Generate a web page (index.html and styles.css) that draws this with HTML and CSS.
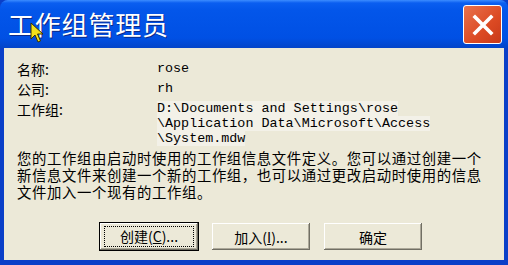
FILE: index.html
```html
<!DOCTYPE html>
<html lang="zh-CN">
<head>
    <meta charset="UTF-8">
    <title>工作组管理员</title>
    <link rel="stylesheet" href="styles.css">
</head>
<body>
    <div class="window">
        <div class="titlebar">
            <span class="title">工作组管理员</span>
            <div class="close">
                <svg width="22" height="22" viewBox="0 0 22 22">
                    <path d="M3 3 L19 19 M19 3 L3 19" stroke="#fff" stroke-width="3.6" stroke-linecap="square" fill="none"/>
                </svg>
            </div>
        </div>
        <div class="content">
            <div class="fields">
                <div class="label">名称:</div>
                <div class="value">rose</div>
                <div class="label">公司:</div>
                <div class="value">rh</div>
                <div class="label">工作组:</div>
                <div class="value path"><span>D:\Documents and Settings\rose<br>\Application Data\Microsoft\Access<br>\System.mdw</span></div>
            </div>
            <div class="desc">
                <div class="line">您的工作组由启动时使用的工作组信息文件定义。您可以通过创建一个</div>
                <div class="line">新信息文件来创建一个新的工作组，也可以通过更改启动时使用的信息</div>
                <div class="line">文件加入一个现有的工作组。</div>
            </div>
            <div class="buttons">
                <button class="btn default"><span class="focus">创建(<u>C</u>)...</span></button>
                <button class="btn">加入(<u>I</u>)...</button>
                <button class="btn">确定</button>
            </div>
        </div>
        <svg class="pointer" width="14" height="22" viewBox="0 0 14 22">
            <path d="M1 1 L1 17 L5 13 L8 20 L10.5 19 L7.5 12 L13 12 Z" fill="#f2e21a" stroke="#3a3300" stroke-width="1"/>
        </svg>
    </div>
</body>
</html>
```

FILE: styles.css
```css
body { margin: 0; background: #0a3fc8; }
.window { position: relative; width: 508px; height: 265px; background: #0a3fc8; display: flex; flex-direction: column; border-radius: 8px 8px 0 0; overflow: hidden; }
.titlebar { height: 48px; display: flex; align-items: center; justify-content: space-between; padding: 0 6px 0 8px; background: linear-gradient(#3c8cff 0px, #0a5ef0 3px, #0356ea 10px, #0050e4 38px, #0344c8 48px); }
.title { color: #fff; font-family: "Noto Sans CJK SC", "DejaVu Sans", sans-serif; font-size: 26px; line-height: 30px; text-shadow: 1px 1px 0 #0b2a8a; letter-spacing: 0.8px; }
.close { width: 37px; height: 37px; border: 1px solid #fff; border-radius: 3px; background: linear-gradient(135deg, #e8724e, #dc4a23 60%, #c8391a); display: flex; align-items: center; justify-content: center; margin-top: 1px; }
.content { flex: 1; margin: 0 4px 5px 4px; background: #ece9d8; padding: 11px 13px 0 13px; font-family: "Noto Sans CJK SC", "DejaVu Sans", sans-serif; font-size: 14px; color: #000; }
.fields { display: grid; grid-template-columns: 140px 1fr; align-items: start; }
.label { line-height: 20px; }
.value { font-family: "Liberation Mono", monospace; font-size: 13.4px; line-height: 20px; }
.path { line-height: 15px; padding-top: 2px; }
.path span { background: #f3f1e8; }
.desc { margin-top: 3px; display: flex; flex-direction: column; font-size: 14.4px; letter-spacing: 0.6px; }
.desc .line { height: 17px; line-height: 17px; white-space: nowrap; }
.buttons { display: flex; gap: 14px; margin: 23px 0 0 83px; }
.btn { width: 98px; height: 27px; font-family: "Noto Sans CJK SC", "DejaVu Sans", sans-serif; font-size: 14px; background: #ece9d8; border: none; border-radius: 0; box-shadow: inset -1px -1px 0 #716f64, inset 1px 1px 0 #fff, inset -2px -2px 0 #aca899; padding: 0; color: #000; }
.btn.default { box-shadow: 0 0 0 1px #000, inset -1px -1px 0 #716f64, inset 1px 1px 0 #fff, inset -2px -2px 0 #aca899; padding: 3px 4px; }
.focus { display: block; height: 100%; line-height: 19px; border: 1px dotted #000; box-sizing: border-box; }
.pointer { position: absolute; left: 30px; top: 22px; }
```
